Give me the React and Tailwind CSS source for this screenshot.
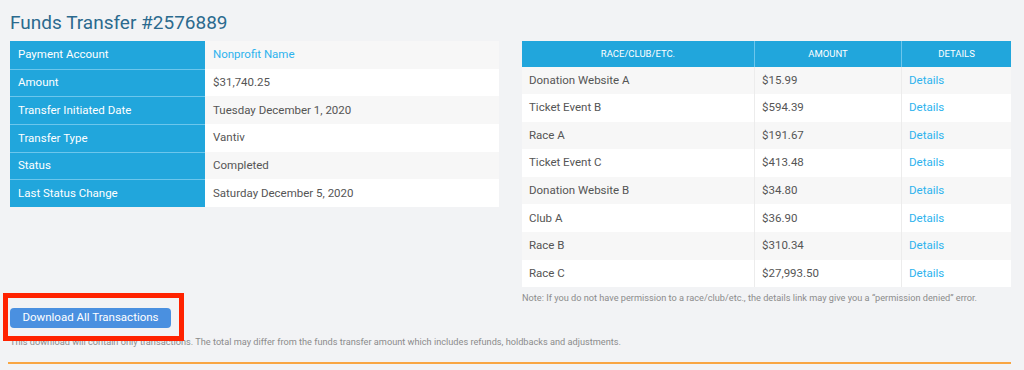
import React from "react";

const info = [
  ["Payment Account", "Nonprofit Name", true],
  ["Amount", "$31,740.25"],
  ["Transfer Initiated Date", "Tuesday December 1, 2020"],
  ["Transfer Type", "Vantiv"],
  ["Status", "Completed"],
  ["Last Status Change", "Saturday December 5, 2020"],
];

const rows = [
  ["Donation Website A", "$15.99"],
  ["Ticket Event B", "$594.39"],
  ["Race A", "$191.67"],
  ["Ticket Event C", "$413.48"],
  ["Donation Website B", "$34.80"],
  ["Club A", "$36.90"],
  ["Race B", "$310.34"],
  ["Race C", "$27,993.50"],
];

export default function App() {
  return (
    <div
      className="w-[1024px] h-[370px] bg-[#f2f3f5] overflow-hidden relative"
      style={{ fontFamily: "Roboto, 'Liberation Sans', sans-serif" }}
    >
      <div className="pl-[10px] pr-[13px] pt-[11px]">
        <h1 className="text-[19px] leading-[24px] text-[#2b6a8e] h-[30px]">Funds Transfer #2576889</h1>
        <div className="flex gap-[23px]">
          <div className="w-[489px]">
            {info.map(([k, v, link], i) => (
              <div key={k} className="flex h-[27.7px]">
                <div className={`w-[195px] bg-[#21a6dc] text-white text-[11.5px] pl-[8px] flex items-center ${i > 0 ? "border-t border-[#6cc6ec]" : ""}`}>
                  {k}
                </div>
                <div className={`flex-1 ${i % 2 === 0 ? "bg-[#f7f7f7]" : "bg-white"} text-[11.5px] pl-[8px] flex items-center ${link ? "text-[#2db3ee]" : "text-[#555]"}`}>
                  {v}
                </div>
              </div>
            ))}
          </div>
          <div className="w-[489px]">
            <div className="flex h-[25.5px] bg-[#21a6dc] text-white text-[9.5px] uppercase">
              <div className="w-[233px] flex items-center justify-center border-r border-[#6cc6ec]">Race/Club/Etc.</div>
              <div className="w-[147px] flex items-center justify-center border-r border-[#6cc6ec]">Amount</div>
              <div className="flex-1 flex items-center justify-center">Details</div>
            </div>
            {rows.map(([n, a], i) => (
              <div key={n} className={`flex h-[27.6px] text-[11.5px] ${i % 2 === 0 ? "bg-[#f7f7f7]" : "bg-white"} text-[#555]`}>
                <div className="w-[233px] flex items-center pl-[7px] border-r border-[#ececec]">{n}</div>
                <div className="w-[147px] flex items-center pl-[7px] border-r border-[#ececec]">{a}</div>
                <div className="flex-1 flex items-center pl-[7px] text-[#2db3ee]">Details</div>
              </div>
            ))}
            <p className="text-[9.2px] text-[#8c8c8c] mt-[4px] whitespace-nowrap">
              Note: If you do not have permission to a race/club/etc., the details link may give you a “permission denied” error.
            </p>
          </div>
        </div>
        <div className="mt-[3px]">
          <button className="bg-[#4a90e0] text-white text-[11.5px] w-[161px] h-[20px] rounded-[4px] flex items-center justify-center">
            Download All Transactions
          </button>
          <p className="text-[9.2px] text-[#8c8c8c] mt-[7px] whitespace-nowrap">
            This download will contain only transactions. The total may differ from the funds transfer amount which includes refunds, holdbacks and adjustments.
          </p>
          <div className="mt-[13px] h-[2px] bg-[#f9a643] w-[1003px] -ml-[2px]"></div>
        </div>
      </div>
      <div className="absolute left-[3px] top-[293px] w-[181px] h-[48px] border-[5px] border-[#ff2200]"></div>
    </div>
  );
}
